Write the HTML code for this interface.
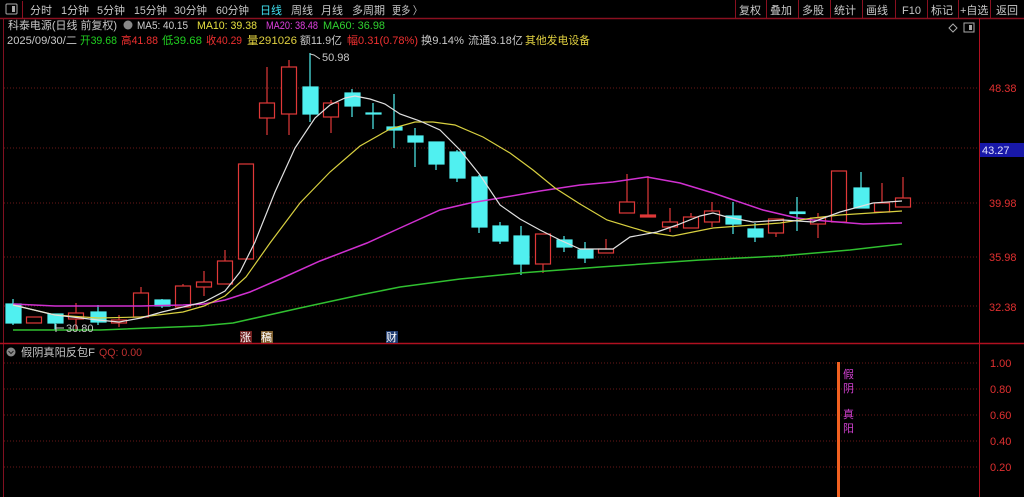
<!DOCTYPE html>
<html><head><meta charset="utf-8"><style>
html,body{margin:0;padding:0;background:#000;width:1024px;height:497px;overflow:hidden}
svg{display:block}
text{font-family:"Liberation Sans","Noto Sans CJK SC",sans-serif;font-size:11px}
</style></head><body>
<svg width="1024" height="497" viewBox="0 0 1024 497" xmlns="http://www.w3.org/2000/svg">
<rect width="1024" height="497" fill="#000"/>
<line x1="0" y1="18.5" x2="1024" y2="18.5" stroke="#8a1020" stroke-width="1.5"/>
<rect x="6" y="4" width="11" height="10" fill="none" stroke="#aaa" rx="1"/><rect x="12" y="6" width="3" height="6" fill="#aaa"/>
<line x1="22.5" y1="1" x2="22.5" y2="18" stroke="#8a1020"/>
<g fill="#c8c8c8">
<text x="30" y="14" textLength="22" lengthAdjust="spacingAndGlyphs">分时</text><text x="61" y="14" textLength="28" lengthAdjust="spacingAndGlyphs">1分钟</text><text x="97" y="14" textLength="28" lengthAdjust="spacingAndGlyphs">5分钟</text><text x="134" y="14" textLength="33" lengthAdjust="spacingAndGlyphs">15分钟</text><text x="174" y="14" textLength="33" lengthAdjust="spacingAndGlyphs">30分钟</text><text x="216" y="14" textLength="33" lengthAdjust="spacingAndGlyphs">60分钟</text>
<text x="260" y="14" fill="#40e0f0" textLength="22" lengthAdjust="spacingAndGlyphs">日线</text><text x="291" y="14" textLength="22" lengthAdjust="spacingAndGlyphs">周线</text><text x="321" y="14" textLength="22" lengthAdjust="spacingAndGlyphs">月线</text><text x="352" y="14" textLength="33" lengthAdjust="spacingAndGlyphs">多周期</text><text x="392" y="14" textLength="30" lengthAdjust="spacingAndGlyphs">更多 〉</text>
</g>
<g stroke="#8a1020"><line x1="735.5" y1="0" x2="735.5" y2="18"/><line x1="766.5" y1="0" x2="766.5" y2="18"/><line x1="798.5" y1="0" x2="798.5" y2="18"/><line x1="830.5" y1="0" x2="830.5" y2="18"/><line x1="862.5" y1="0" x2="862.5" y2="18"/><line x1="895.5" y1="0" x2="895.5" y2="18"/><line x1="927.5" y1="0" x2="927.5" y2="18"/><line x1="958.5" y1="0" x2="958.5" y2="18"/><line x1="990.5" y1="0" x2="990.5" y2="18"/></g>
<g fill="#c8c8c8"><text x="739" y="14">复权</text><text x="770" y="14">叠加</text><text x="802" y="14">多股</text><text x="834" y="14">统计</text><text x="866" y="14">画线</text><text x="902" y="14">F10</text><text x="931" y="14">标记</text><text x="960" y="14">+自选</text><text x="996" y="14">返回</text></g>
<text x="8" y="29" fill="#c8c8c8" textLength="109" lengthAdjust="spacingAndGlyphs">科泰电源(日线 前复权)</text>
<circle cx="128" cy="25" r="4.5" fill="#888"/>
<text x="137" y="29" fill="#d0d0d0" textLength="51" lengthAdjust="spacingAndGlyphs">MA5: 40.15</text><text x="197" y="29" fill="#e6e040" textLength="60" lengthAdjust="spacingAndGlyphs">MA10: 39.38</text><text x="266" y="29" fill="#e040e0" textLength="52" lengthAdjust="spacingAndGlyphs">MA20: 38.48</text>
<text x="323" y="29" fill="#30d030" textLength="62" lengthAdjust="spacingAndGlyphs">MA60: 36.98</text>
<text x="7" y="44" fill="#c8c8c8" textLength="70" lengthAdjust="spacingAndGlyphs">2025/09/30/二</text>
<text x="80" y="44" fill="#20d020" textLength="37" lengthAdjust="spacingAndGlyphs">开39.68</text><text x="121" y="44" fill="#f03030" textLength="37" lengthAdjust="spacingAndGlyphs">高41.88</text><text x="162" y="44" fill="#20d020" textLength="40" lengthAdjust="spacingAndGlyphs">低39.68</text><text x="206" y="44" fill="#f03030" textLength="36" lengthAdjust="spacingAndGlyphs">收40.29</text><text x="247" y="44" fill="#e0d040" textLength="50" lengthAdjust="spacingAndGlyphs">量291026</text><text x="300" y="44" fill="#c8c8c8" textLength="42" lengthAdjust="spacingAndGlyphs">额11.9亿</text><text x="347" y="44" fill="#f03030" textLength="71" lengthAdjust="spacingAndGlyphs">幅0.31(0.78%)</text><text x="421" y="44" fill="#c8c8c8" textLength="43" lengthAdjust="spacingAndGlyphs">换9.14%</text><text x="468" y="44" fill="#c8c8c8" textLength="55" lengthAdjust="spacingAndGlyphs">流通3.18亿</text><text x="525" y="44" fill="#e0d040" textLength="65" lengthAdjust="spacingAndGlyphs">其他发电设备</text>
<path d="M953 24 l4 4 l-4 4 l-4 -4z" fill="none" stroke="#aaa"/><rect x="964" y="23" width="10" height="9" fill="none" stroke="#aaa"/><rect x="969" y="25" width="3" height="5" fill="#aaa"/>
<line x1="979.5" y1="18" x2="979.5" y2="497" stroke="#b01020"/>
<line x1="3.5" y1="18" x2="3.5" y2="497" stroke="#801020"/>
<line x1="0" y1="343.5" x2="1024" y2="343.5" stroke="#b01020" stroke-width="1.5"/>
<g stroke="#6a1818" stroke-dasharray="1 2"><line x1="4" y1="88" x2="979" y2="88"/><line x1="4" y1="148" x2="979" y2="148"/><line x1="4" y1="203" x2="979" y2="203"/><line x1="4" y1="257" x2="979" y2="257"/><line x1="4" y1="306" x2="979" y2="306"/>
<line x1="4" y1="363" x2="979" y2="363"/><line x1="4" y1="389" x2="979" y2="389"/><line x1="4" y1="415" x2="979" y2="415"/><line x1="4" y1="441" x2="979" y2="441"/><line x1="4" y1="467" x2="979" y2="467"/></g>
<g fill="#e03030"><text x="989" y="92">48.38</text><text x="989" y="207">39.98</text><text x="989" y="261">35.98</text><text x="989" y="311">32.38</text>
<text x="990" y="367">1.00</text><text x="990" y="393">0.80</text><text x="990" y="419">0.60</text><text x="990" y="445">0.40</text><text x="990" y="471">0.20</text></g>
<rect x="980" y="143" width="44" height="14" fill="#1818a8"/><text x="982" y="154" fill="#e0e0ff">43.27</text>
<g stroke="#e03838" fill="none" stroke-width="1.2">
<path d="M34 317v6M76 303v28M119 315v12M141 287v30M183 284v23M204 271v25M225 250v34M246 164v95M267 67v68M289 60v75M331 100v33M543 234v39M606 239v14M627 174v39M648 176v41M670 208v24M691 213v15M712 202v25M776 219v18M818 213v25M839 171v51M882 183v29M903 177v30"/>
<rect x="26.5" y="317" width="15" height="6" fill="#000"/><rect x="68.5" y="313" width="15" height="6" fill="#000"/><rect x="111.5" y="320" width="15" height="3" fill="#000"/><rect x="133.5" y="293" width="15" height="24" fill="#000"/><rect x="175.5" y="286" width="15" height="21" fill="#000"/><rect x="196.5" y="282" width="15" height="5" fill="#000"/><rect x="217.5" y="261" width="15" height="23" fill="#000"/><rect x="238.5" y="164" width="15" height="95" fill="#000"/><rect x="259.5" y="103" width="15" height="15" fill="#000"/><rect x="281.5" y="67" width="15" height="47" fill="#000"/><rect x="323.5" y="103" width="15" height="14" fill="#000"/><rect x="535.5" y="234" width="15" height="30" fill="#000"/><rect x="598.5" y="249" width="15" height="4" fill="#000"/><rect x="619.5" y="202" width="15" height="11" fill="#000"/><rect x="640.5" y="215" width="15" height="2" fill="#e03838"/><rect x="662.5" y="222" width="15" height="5" fill="#000"/><rect x="683.5" y="217" width="15" height="11" fill="#000"/><rect x="704.5" y="211" width="15" height="11" fill="#000"/><rect x="768.5" y="219" width="15" height="14" fill="#000"/><rect x="810.5" y="218" width="15" height="6" fill="#000"/><rect x="831.5" y="171" width="15" height="51" fill="#000"/><rect x="874.5" y="203" width="15" height="9" fill="#000"/><rect x="895.5" y="198" width="15" height="9" fill="#000"/>
</g>
<g stroke="#50f0f0" fill="#50f0f0" stroke-width="1.2">
<path d="M13 299v26M55 314v16M98 305v20M162 299v9M310 53v69M352 89v28M373 103v26M394 94v54M415 128v39M436 142v28M457 150v32M479 175v58M500 222v22M521 226v49M564 236v16M585 242v21M733 202v32M755 223v19M797 197v34M861 172v36"/>
<rect x="6" y="304" width="15" height="19"/><rect x="48" y="314" width="15" height="9"/><rect x="91" y="312" width="15" height="10"/><rect x="155" y="300" width="15" height="6"/><rect x="303" y="87" width="15" height="27"/><rect x="345" y="93" width="15" height="13"/><rect x="366" y="113" width="15" height="1"/><rect x="387" y="127" width="15" height="3"/><rect x="408" y="136" width="15" height="6"/><rect x="429" y="142" width="15" height="22"/><rect x="450" y="152" width="15" height="26"/><rect x="472" y="177" width="15" height="50"/><rect x="493" y="226" width="15" height="15"/><rect x="514" y="236" width="15" height="28"/><rect x="557" y="240" width="15" height="7"/><rect x="578" y="250" width="15" height="8"/><rect x="726" y="216" width="15" height="8"/><rect x="748" y="229" width="15" height="8"/><rect x="790" y="212" width="15" height="1.5"/><rect x="854" y="188" width="15" height="20"/>
</g>
<g fill="none" stroke-width="1.2">
<polyline stroke="#30c030" stroke-width="1.5" points="13,330 100,330 200,326 233,323 300,308 360,295 400,287 460,279 520,273 600,267 700,260 780,256 850,250 902,244"/>
<polyline stroke="#d030d0" stroke-width="1.5" points="13,304 55,306 100,306 141,306 183,305 204,304 225,300 250,292 280,279 320,261 367,243 400,228 440,210 470,203 500,198 540,191 580,185 613,182 647,177 680,183 713,193 763,210 797,218 813,220 863,224 902,223"/>
<polyline stroke="#d8d040" points="13,305 55,315 98,318 141,317 183,312 204,306 225,296 246,277 270,243 300,203 330,172 360,146 390,129 415,122 433,122 455,125 483,137 510,153 533,170 555,188 580,204 607,220 647,232 673,236 713,228 780,223 813,218 840,215 902,211"/>
<polyline stroke="#e0e0e0" points="13,305 55,315 98,320 119,322 141,318 162,312 183,307 204,302 225,291 240,272 255,242 275,192 295,148 315,118 330,105 345,98 355,96 370,99 385,104 400,114 420,121 440,130 460,150 480,175 500,205 520,219 540,230 560,240 580,249 613,249 630,237 657,232 677,225 700,216 713,213 727,217 753,222 783,220 813,222 840,212 873,203 902,201"/>
</g>
<path d="M310 54 l4 1 l6 4" stroke="#ccc" fill="none"/><text x="322" y="61" fill="#c8c8c8">50.98</text>
<path d="M56 324 v8 M56 328 h8" stroke="#ccc" fill="none"/><text x="66" y="332" fill="#c8c8c8">30.80</text>
<rect x="240" y="331" width="12" height="12" fill="#702020"/><text x="240" y="341" fill="#fff">涨</text>
<rect x="261" y="331" width="12" height="12" fill="#806030"/><text x="261" y="341" fill="#fff">稿</text>
<rect x="386" y="331" width="12" height="12" fill="#203c70"/><text x="386" y="341" fill="#fff">财</text>
<circle cx="11" cy="352" r="4.5" fill="#888"/><path d="M8.5 351 l2.5 2.5 l2.5 -2.5" stroke="#222" fill="none"/>
<text x="21" y="356" fill="#c8c8c8" textLength="74" lengthAdjust="spacingAndGlyphs">假阴真阳反包F</text><text x="99" y="356" fill="#c03030" textLength="43" lengthAdjust="spacingAndGlyphs">QQ: 0.00</text>
<rect x="837" y="362" width="3" height="135" fill="#f06020"/>
<g fill="#d040d0"><text x="843" y="378">假</text><text x="843" y="392">阴</text><text x="843" y="418">真</text><text x="843" y="432">阳</text></g>
</svg>
</body></html>
